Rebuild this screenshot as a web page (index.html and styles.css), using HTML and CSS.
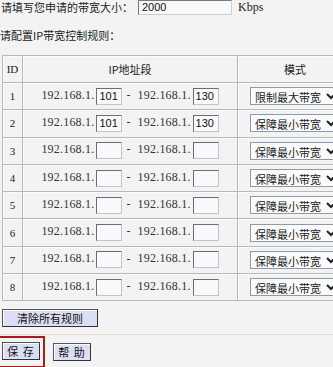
FILE: index.html
```html
<!DOCTYPE html>
<html lang="zh-CN">
<head>
  <meta charset="UTF-8">
  <title>IP带宽控制</title>
  <link rel="stylesheet" href="styles.css">
</head>
<body>
  <div class="page">
    <!-- Bandwidth -->
    <div class="line bw-line">
      <span class="label">请填写您申请的带宽大小：</span>
      <input type="text" class="bw-input" value="2000">
      <span class="unit">Kbps</span>
    </div>
    <div class="line rules-title">请配置IP带宽控制规则：</div>

    <!-- Rules table -->
    <table class="rules">
      <thead>
        <tr>
          <th class="col-id">ID</th>
          <th class="col-ip">IP地址段</th>
          <th class="col-mode">模式</th>
        </tr>
      </thead>
      <tbody>
        <tr>
          <td class="col-id">1</td>
          <td class="col-ip">192.168.1.<input class="ip-box" value="101"><span class="dash">-</span>192.168.1.<input class="ip-box" value="130"></td>
          <td class="col-mode"><select class="mode"><option>限制最大带宽</option></select></td>
        </tr>
        <tr>
          <td class="col-id">2</td>
          <td class="col-ip">192.168.1.<input class="ip-box" value="101"><span class="dash">-</span>192.168.1.<input class="ip-box" value="130"></td>
          <td class="col-mode"><select class="mode"><option>保障最小带宽</option></select></td>
        </tr>
        <tr>
          <td class="col-id">3</td>
          <td class="col-ip">192.168.1.<input class="ip-box"><span class="dash">-</span>192.168.1.<input class="ip-box"></td>
          <td class="col-mode"><select class="mode"><option>保障最小带宽</option></select></td>
        </tr>
        <tr>
          <td class="col-id">4</td>
          <td class="col-ip">192.168.1.<input class="ip-box"><span class="dash">-</span>192.168.1.<input class="ip-box"></td>
          <td class="col-mode"><select class="mode"><option>保障最小带宽</option></select></td>
        </tr>
        <tr>
          <td class="col-id">5</td>
          <td class="col-ip">192.168.1.<input class="ip-box"><span class="dash">-</span>192.168.1.<input class="ip-box"></td>
          <td class="col-mode"><select class="mode"><option>保障最小带宽</option></select></td>
        </tr>
        <tr>
          <td class="col-id">6</td>
          <td class="col-ip">192.168.1.<input class="ip-box"><span class="dash">-</span>192.168.1.<input class="ip-box"></td>
          <td class="col-mode"><select class="mode"><option>保障最小带宽</option></select></td>
        </tr>
        <tr>
          <td class="col-id">7</td>
          <td class="col-ip">192.168.1.<input class="ip-box"><span class="dash">-</span>192.168.1.<input class="ip-box"></td>
          <td class="col-mode"><select class="mode"><option>保障最小带宽</option></select></td>
        </tr>
        <tr>
          <td class="col-id">8</td>
          <td class="col-ip">192.168.1.<input class="ip-box"><span class="dash">-</span>192.168.1.<input class="ip-box"></td>
          <td class="col-mode"><select class="mode"><option>保障最小带宽</option></select></td>
        </tr>
      </tbody>
    </table>

    <div class="clear-row">
      <button class="btn btn-clear">清除所有规则</button>
    </div>

    <!-- Save / Help -->
    <div class="actions">
      <span class="highlight"><button class="btn btn-small">保 存</button></span>
      <button class="btn btn-small">帮 助</button>
    </div>
  </div>
</body>
</html>
```

FILE: styles.css
```css
/* Base */
* { box-sizing: border-box; margin: 0; padding: 0; }
html, body {
  width: 333px;
  height: 367px;
  overflow: hidden;
}
body {
  background: #f3f3f3;
  color: #222;
  font-family: "Liberation Serif", "Noto Sans CJK SC", serif;
  font-size: 12px;
}
.page {
  width: 333px;
  overflow: hidden;
}

/* Top lines */
.line {
  display: flex;
  align-items: center;
  font-family: "Noto Sans CJK SC", sans-serif;
  font-size: 11px;
  white-space: nowrap;
}
.bw-line {
  height: 15px;
}
.bw-line .label {
  width: 138px;
  padding-left: 1px;
  line-height: 15px;
}
.bw-input {
  width: 94px;
  height: 15px;
  margin-top: -1px;
  border: 1px solid #7a7a7a;
  border-right-color: #cfcfcf;
  border-bottom-color: #cfcfcf;
  background: #f9f9f9;
  font-family: "Liberation Sans", sans-serif;
  font-size: 11px;
  padding-left: 3px;
  color: #111;
}
.unit {
  margin-left: 6px;
  font-family: "Liberation Serif", serif;
  font-size: 12px;
}
.rules-title {
  margin-top: 13px;
  height: 13px;
}

/* Rules table */
.rules {
  margin-top: 14px;
  margin-left: 2px;
  width: 370px;
  border-collapse: collapse;
  table-layout: fixed;
}
.rules th,
.rules td {
  border: 1px solid #b8b8b8;
  box-shadow: inset 1px 1px 0 #fbfbfb;
  text-align: center;
  white-space: nowrap;
  font-weight: normal;
}
.rules th {
  height: 27px;
  font-family: "Noto Sans CJK SC", sans-serif;
  font-size: 11px;
}
.rules th.col-id {
  font-family: "Liberation Serif", serif;
  font-size: 11px;
}
.rules td {
  height: 27.3px;
}
.col-id { width: 20px; font-size: 11px; }
.col-ip { width: 215px; }
td.col-mode {
  text-align: left;
  padding-left: 12px;
}
th.col-mode {
  text-align: left;
  padding-left: 46px;
}
td.col-ip {
  font-size: 12px;
  color: #333;
  letter-spacing: 0.2px;
}
.dash {
  margin: 0 7px 0 4px;
}
.ip-box {
  width: 26px;
  height: 17px;
  margin: 0 0 0 2px;
  vertical-align: middle;
  border: 1px solid #6d6d6d;
  border-right-color: #c4c4c4;
  border-bottom-color: #c4c4c4;
  background: #f7f9fc;
  font-family: "Liberation Sans", sans-serif;
  font-size: 11px;
  color: #111;
  text-align: left;
  padding-left: 2px;
}
.mode {
  width: 90px;
  height: 18px;
  border: 1px solid #8a9bb0;
  background: #fbfbfb;
  font-family: "Noto Sans CJK SC", sans-serif;
  font-size: 11px;
  color: #222;
  vertical-align: middle;
}

/* Buttons */
.clear-row {
  padding: 8px 0 0 2px;
  height: 34px;
  border-bottom: 1px solid #e8dcc4;
}
.btn {
  background: #dcdff3;
  border: 1px solid #555;
  border-right-color: #333;
  border-bottom-color: #333;
  box-shadow: inset 1px 1px 0 #fff;
  font-family: "Noto Sans CJK SC", sans-serif;
  font-size: 11px;
  color: #111;
  height: 18px;
  line-height: 14px;
}
.btn-clear {
  width: 96px;
}
.actions {
  display: flex;
  align-items: center;
  gap: 8px;
  padding-top: 1px;
}
.highlight {
  display: flex;
  padding: 4px 3px 6px 2px;
  border: 2px solid #a81c1c;
  border-left: none;
}
.btn-small {
  width: 38px;
  letter-spacing: 1px;
}
```
